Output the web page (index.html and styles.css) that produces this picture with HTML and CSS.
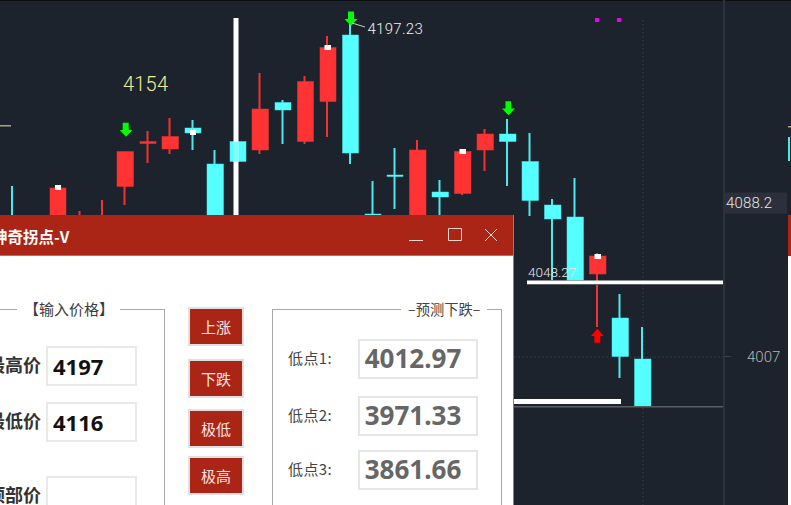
FILE: index.html
```html
<!DOCTYPE html>
<html lang="zh">
<head>
<meta charset="utf-8">
<title>神奇拐点-V</title>
<link rel="stylesheet" href="styles.css">
</head>
<body>
<main class="screen">
  <svg class="chart" width="791" height="505" viewBox="0 0 791 505" xmlns="http://www.w3.org/2000/svg">
    <rect class="topline" x="0" y="0" width="791" height="1"/>
    <line class="dot" x1="643" y1="20" x2="643" y2="505"/>
    <line class="dot" x1="514" y1="357" x2="723" y2="357"/>
    <rect class="axis" x="723" y="0" width="2" height="505"/>
    <rect class="tick" x="725" y="356" width="6" height="1"/>
    <rect class="tickY" x="0" y="125" width="11" height="1.5"/>
    <rect class="tickY" x="788" y="126" width="3" height="1.5"/>
    <rect class="cw" x="788" y="137" width="2" height="24"/>

    <rect class="mag" x="595" y="18" width="4" height="4"/>
    <rect class="mag" x="617" y="18" width="4" height="4"/>

    <rect class="cw" x="11" y="186" width="2" height="30"/>
    <rect class="rw" x="78.5" y="211" width="2" height="5"/>
    <rect class="rw" x="101" y="200" width="2" height="16"/>
    <rect class="rb" x="50" y="188" width="16" height="28"/><rect class="mark" x="55" y="185" width="6" height="5"/>
    <rect class="rw" x="123.5" y="186" width="2" height="19"/><rect class="rb" x="117" y="151.500" width="16.500" height="35"/>
    <rect class="rw" x="146.500" y="131" width="2" height="32"/><rect class="rb" x="140" y="141.500" width="16" height="2"/>
    <rect class="rw" x="168.500" y="118" width="2" height="36"/><rect class="rb" x="162" y="136.500" width="16.500" height="12.500"/>
    <rect class="cw" x="191.500" y="120" width="2" height="30"/><rect class="cb" x="185" y="128" width="16" height="5"/><rect class="mark" x="190" y="130" width="6" height="5"/>
    <rect class="cw" x="213.500" y="150" width="2" height="15"/><rect class="cb" x="207" y="164" width="16.500" height="52"/>
    <rect class="cb" x="230" y="141.500" width="16" height="20"/>
    <rect class="mark" x="233.500" y="18" width="5" height="198"/>
    <rect class="cb translucent" x="233.500" y="141.500" width="5" height="20"/>
    <rect class="rw" x="258.500" y="73" width="2" height="81"/><rect class="rb" x="252" y="109" width="16.500" height="41"/>
    <rect class="cw" x="281.500" y="100" width="2" height="44"/><rect class="cb" x="275" y="102.500" width="16" height="7.500"/>
    <rect class="rw" x="303.500" y="76" width="2" height="68"/><rect class="rb" x="297.500" y="81.500" width="16" height="60"/>
    <rect class="rw" x="326" y="36" width="2" height="101"/><rect class="rb" x="320" y="47.500" width="16" height="54"/><rect class="mark" x="324.500" y="45" width="6.500" height="5"/>
    <rect class="cw" x="349" y="22" width="2" height="142"/><rect class="cb" x="342.500" y="35" width="16" height="118"/>
    <rect class="cw" x="371.500" y="181" width="2" height="35"/><rect class="cb" x="365" y="214" width="16" height="2"/>
    <rect class="cw" x="393.500" y="148" width="2" height="61"/><rect class="cb" x="387" y="175" width="16" height="1.500"/>
    <rect class="rw" x="416" y="140" width="2" height="11"/><rect class="rb" x="409.500" y="150" width="16.500" height="66"/>
    <rect class="cw" x="438.500" y="180" width="2" height="36"/><rect class="cb" x="432" y="192" width="16.500" height="5"/>
    <rect class="rw" x="461" y="190" width="2" height="5"/><rect class="rb" x="454.500" y="151.500" width="16.500" height="42"/><rect class="mark" x="459.500" y="149" width="6.500" height="5"/>
    <rect class="rw" x="483.500" y="129" width="2" height="42"/><rect class="rb" x="477" y="134" width="16.500" height="16"/>
    <rect class="cw" x="506" y="119" width="2" height="67"/><rect class="cb" x="499.500" y="134" width="16.500" height="7.500"/>
    <rect class="cw" x="528.500" y="133" width="2" height="83"/><rect class="cb" x="522" y="161.500" width="16.500" height="39"/>
    <rect class="cw" x="551" y="199" width="2" height="81"/><rect class="cb" x="544.500" y="205" width="16.500" height="14"/>
    <rect class="cw" x="573.500" y="178" width="2" height="40"/><rect class="cb" x="567" y="217" width="16.500" height="63"/>
    <rect class="rw" x="596" y="253" width="2" height="74"/><rect class="rb" x="589.500" y="256" width="16.500" height="18"/><rect class="mark" x="594.500" y="254" width="6.500" height="5"/>
    <rect class="cw" x="618.500" y="294" width="2" height="84"/><rect class="cb" x="612" y="318" width="16.500" height="38.500"/>
    <rect class="cw" x="641" y="327" width="2" height="33"/><rect class="cb" x="634.500" y="359" width="16.500" height="47"/>

    <rect class="greyline" x="514" y="406" width="209" height="1.500"/>
    <rect class="mark" x="527" y="280.500" width="196" height="4"/>
    <rect class="greyline" x="527" y="284" width="196" height="1"/>
    <rect class="mark" x="514" y="399" width="107" height="5"/>

    <polygon class="down" points="122.700,122.700 128.700,122.700 128.700,130 132.600,130 126,136.700 119.800,130 122.700,130"/>
    <polygon class="down" points="348,11.500 354,11.500 354,19 357.700,19 351,25.700 344.500,19 348,19"/>
    <polygon class="down" points="505.500,101.300 511,101.300 511,108.500 515,108.500 508.500,115.300 502,108.500 505.500,108.500"/>
    <polygon class="up" points="597.300,328.700 603.700,336 600.300,336 600.300,342.700 594.300,342.700 594.300,336 591,336"/>

    <line class="leader" x1="352" y1="23" x2="365" y2="27"/>
    <text class="lbl yellow" x="123" y="91">4154</text>
    <text class="lbl top" x="367.500" y="34">4197.23</text>
    <text class="lbl mid" x="528" y="277">4048.27</text>
    <rect class="pricebox" x="725" y="192.500" width="62" height="21"/>
    <text class="lbl price" x="726" y="208">4088.2</text>
    <text class="lbl axis-text" x="747" y="362">4007</text>
  </svg>

  <section class="window">
    <header class="titlebar">
      <h1 class="title">神奇拐点-V</h1>
      <div class="controls">
        <svg class="ctl-min" width="14" height="14" viewBox="0 0 14 14" xmlns="http://www.w3.org/2000/svg"><path class="ctl" d="M0 12.500H14"/></svg>
        <svg width="14" height="14" viewBox="0 0 14 14" xmlns="http://www.w3.org/2000/svg"><path class="ctl" d="M.5 .5H13.500V12.500H.5Z"/></svg>
        <svg width="14" height="14" viewBox="0 0 14 14" xmlns="http://www.w3.org/2000/svg"><path class="ctl" d="M1 1L13 13M13 1L1 13"/></svg>
      </div>
    </header>
    <div class="content">
      <fieldset class="group group-input">
        <legend class="legend-input">【输入价格】</legend>
        <div class="row"><label class="field-label">最高价</label><div class="input">4197</div></div>
        <div class="row"><label class="field-label">最低价</label><div class="input">4116</div></div>
        <div class="row row-gap"><label class="field-label">顶部价</label><div class="input"></div></div>
      </fieldset>
      <div class="buttons">
        <button class="btn">上涨</button>
        <button class="btn btn-2">下跌</button>
        <button class="btn btn-3">极低</button>
        <button class="btn btn-4">极高</button>
      </div>
      <fieldset class="group group-output">
        <legend class="legend-output">–预测下跌–</legend>
        <div class="out-row"><span class="out-label">低点1:</span><div class="out-value">4012.97</div></div>
        <div class="out-row out-2"><span class="out-label">低点2:</span><div class="out-value">3971.33</div></div>
        <div class="out-row out-3"><span class="out-label">低点3:</span><div class="out-value">3861.66</div></div>
      </fieldset>
    </div>
  </section>
  <div class="edge-window"></div>
</main>
</body>
</html>
```
FILE: styles.css
```css
* { box-sizing: border-box; }
html, body { margin: 0; padding: 0; width: 791px; height: 505px; overflow: hidden; background: #1d232d; }
.screen { position: relative; width: 791px; height: 505px; overflow: hidden; font-family: "Noto Sans CJK SC", "Noto Sans", sans-serif; }

.chart { display: block; }
.topline { fill: #0b0d11; }
.dot { stroke: #39404b; stroke-width: 1; stroke-dasharray: 1.500 2.500; }
.axis { fill: #2b323e; }
.tick { fill: #3a414c; }
.tickY { fill: #a8a67a; }
.mag { fill: #ee00ee; }
.cb { fill: #55ffff; stroke: #4ae6ea; stroke-width: .5; }
.cw { fill: #4ce8ec; }
.rb { fill: #ff3333; stroke: #ee3030; stroke-width: .5; }
.rw { fill: #f53232; }
.mark { fill: #ffffff; }
.translucent { opacity: .75; stroke: none; }
.greyline { fill: #5a5d62; }
.down { fill: #00ff00; }
.up { fill: #ff0000; }
.leader { stroke: #c8c8c8; stroke-width: 1; }
.lbl { font-family: Roboto, "Liberation Sans", sans-serif; font-weight: 300; }
.yellow { font-size: 20px; fill: #f2ee94; letter-spacing: .2px; }
.top { font-size: 15px; fill: #f2f2f2; letter-spacing: .3px; }
.mid { font-size: 13.500px; fill: #e6e6e6; }
.price { font-size: 15px; fill: #e8e8e8; letter-spacing: .2px; }
.axis-text { font-size: 15px; fill: #b4b4b4; }
.pricebox { fill: #2d303c; }

.window { position: absolute; left: -30px; top: 215px; width: 544px; height: 290px; overflow: hidden; background: #fff; border-right: 1px solid #c9665d; }
.titlebar { height: 41px; background: #ab2516; display: flex; align-items: center; justify-content: space-between; border-bottom: 1px solid #c9665d; }
.title { margin: 2px 0 0 22px; font-size: 15.500px; line-height: 20px; font-weight: 700; color: #fff; }
.controls { display: flex; gap: 22px; margin-right: 15px; }
.ctl-min { margin-right: 3px; }
.ctl { fill: none; stroke: #f0d4d0; stroke-width: 1; }

.content { display: flex; align-items: flex-start; padding: 43px 0 0 10px; }
.group { margin: 0; min-width: 0; border: 1px solid #a9a9a9; border-width: 1.500px; height: 300px; }
.group-input { width: 185px; padding: 27px 0 0 0; }
.group-output { width: 230px; margin-left: 28px; padding: 20px 0 0 0; }
legend { padding: 0; line-height: 20px; height: 20px; font-size: 14px; color: #444; white-space: nowrap; }
.legend-input { margin-left: 36px; padding: 0 6px 0 7px; font-size: 15px; color: #3c3c3c; }
.legend-output { margin-left: 128px; padding: 0 7px; font-size: 14.250px; }

.row { display: flex; align-items: center; height: 40px; margin-bottom: 16px; }
.row-gap { margin-top: 34px; }
.field-label { width: 60px; padding-bottom: 4px; text-align: right; font-size: 18px; font-weight: 700; color: #333; line-height: 24px; }
.input { width: 91px; height: 40px; margin-left: 5px; border: 2px solid #e9e9e9; padding-left: 5px; font-family: "Noto Sans", sans-serif; font-size: 22px; font-weight: 700; line-height: 36px; color: #111; }

.buttons { display: flex; flex-direction: column; margin: 8px 0 0 23px; width: 56px; }
.btn { width: 56px; height: 39px; padding: 0; border: 2px solid #e0e0e0; background: #ab2516; color: #f8e6e4; font-family: "Noto Sans CJK SC", sans-serif; font-size: 15px; line-height: 20px; }
.btn-2 { margin-top: 13px; }
.btn-3 { margin-top: 11px; }
.btn-4 { margin-top: 8px; }

.out-row { display: flex; align-items: center; height: 40px; }
.out-2 { margin-top: 17px; }
.out-3 { margin-top: 14px; }
.out-label { width: 70px; margin-left: 15px; padding-bottom: 3px; font-size: 15px; letter-spacing: .4px; color: #444; line-height: 20px; white-space: nowrap; }
.out-value { width: 120px; height: 40px; border: 2px solid #e6e6e6; padding-right: 10px; text-align: center; font-family: "Noto Sans", sans-serif; font-size: 26px; font-weight: 700; line-height: 34px; color: #666; }

.edge-window { position: absolute; right: 0; top: 215px; width: 3px; height: 290px; background: linear-gradient(#ab2516 0, #ab2516 41px, #fff 41px); }
```
